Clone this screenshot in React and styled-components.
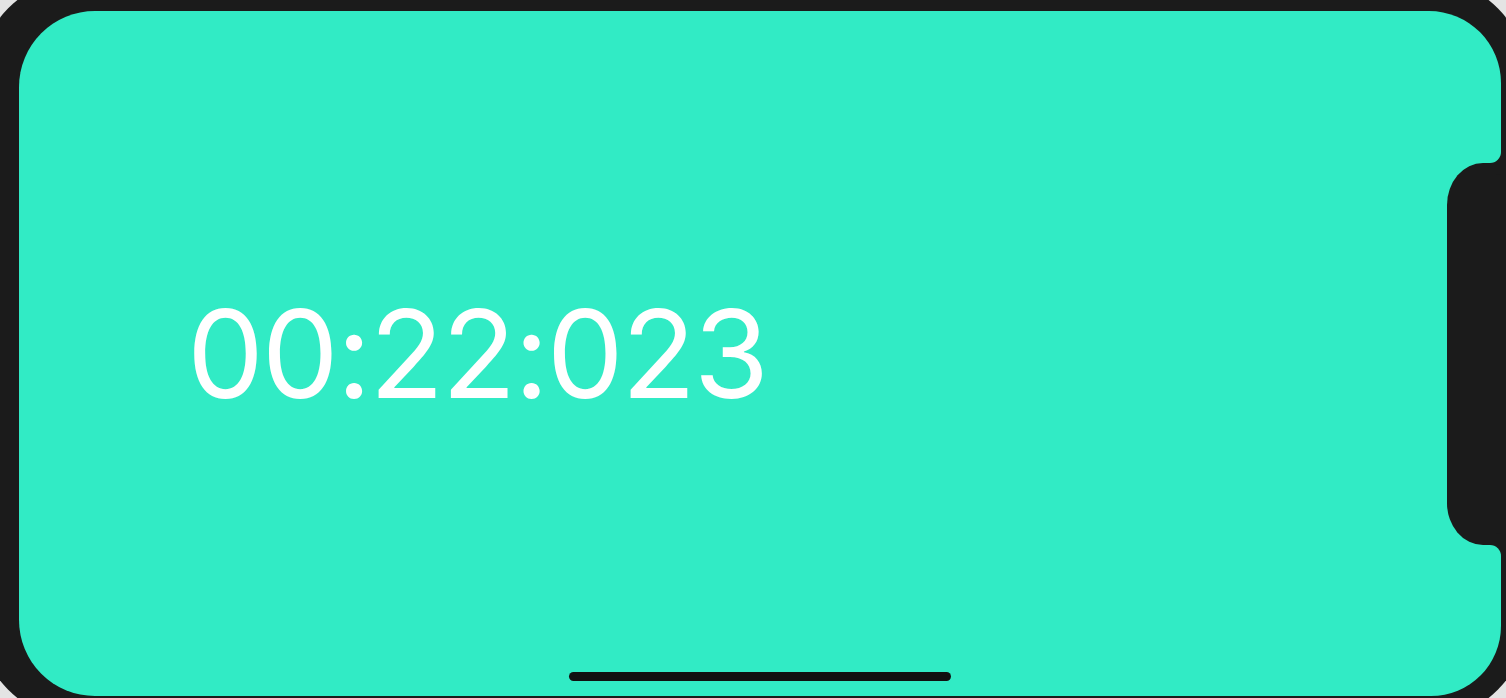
import React from "react";
import styled, { createGlobalStyle } from "styled-components";

const Global = createGlobalStyle`
  html, body { margin: 0; padding: 0; background: #e4e4e4; }
  body { font-family: Inter, "Noto Sans", sans-serif; }
  #root { width: 100%; }
`;

const Page = styled.div`
  width: 100%;
  height: 698px;
  overflow: hidden;
  background: #e4e4e4;
`;

const Phone = styled.div`
  box-sizing: border-box;
  margin: -24px;
  width: calc(100% + 48px);
  height: 746px;
  border-radius: 110px;
  background: #1b1b1b;
  padding: 35px 29px 26px 43px;
  display: flex;
`;

const Screen = styled.div`
  position: relative;
  flex: 1;
  background: #31ebc5;
  border-radius: 76px 72px 70px 76px;
  overflow: hidden;
  display: flex;
  align-items: center;
  padding-left: 168px;
`;

const Time = styled.div`
  font-family: Inter, "Noto Sans", sans-serif;
  font-size: 122px;
  font-weight: 400;
  color: #ffffff;
  line-height: 1;
  letter-spacing: -2.2px;
  margin-top: 1px;
`;

const Notch = styled.div`
  position: absolute;
  right: 0;
  top: 152px;
  width: 54px;
  height: 382px;
  background: #1b1b1b;
  border-radius: 36px 0 0 36px / 42px 0 0 42px;

  &::before,
  &::after {
    content: "";
    position: absolute;
    right: 0;
    width: 11px;
    height: 11px;
    background: transparent;
  }
  &::before {
    top: -11px;
    border-bottom-right-radius: 11px;
    box-shadow: 6px 6px 0 6px #1b1b1b;
  }
  &::after {
    bottom: -11px;
    border-top-right-radius: 11px;
    box-shadow: 6px -6px 0 6px #1b1b1b;
  }
`;

const HomeIndicator = styled.div`
  position: absolute;
  left: 50%;
  bottom: 15px;
  transform: translateX(-50%);
  width: 382px;
  height: 9px;
  border-radius: 5px;
  background: #111111;
`;

export default function App() {
  return (
    <>
      <Global />
      <Page>
        <Phone>
          <Screen>
            <Time>00:22:023</Time>
            <Notch />
            <HomeIndicator />
          </Screen>
        </Phone>
      </Page>
    </>
  );
}
